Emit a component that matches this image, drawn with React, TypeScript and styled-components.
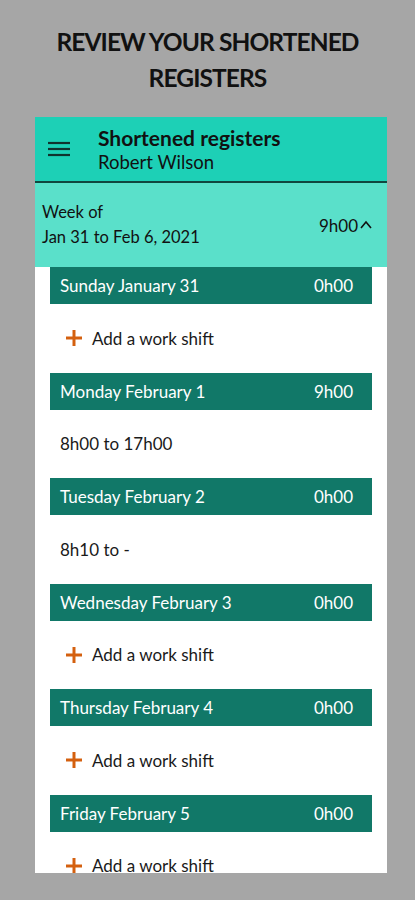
import styled, { createGlobalStyle } from "styled-components";

const GlobalStyle = createGlobalStyle`
    html, body {
        margin: 0;
        padding: 0;
        background: #a6a6a6;
        font-family: Lato, "Open Sans", sans-serif;
    }
`;

const Page = styled.div`
    width: 415px;
    height: 900px;
    overflow: hidden;
    display: flex;
    flex-direction: column;
    align-items: center;
    background: #a6a6a6;
`;

const Title = styled.h1`
    margin: 24px 0 0;
    height: 93px;
    flex-shrink: 0;
    font-size: 24.5px;
    line-height: 36px;
    font-weight: 700;
    color: #111;
    text-align: center;
    letter-spacing: -0.9px;
`;

const Phone = styled.div`
    width: 352px;
    height: 756px;
    flex-shrink: 0;
    margin-left: 7px;
    background: #fff;
    overflow: hidden;
    display: flex;
    flex-direction: column;
    & > * {
        flex-shrink: 0;
    }
`;

const AppBar = styled.header`
    height: 64px;
    background: #1dd0b6;
    border-bottom: 2px solid #10473f;
    display: flex;
    align-items: center;
    gap: 27px;
    padding: 0 12px;
`;

const Titles = styled.div`
    display: flex;
    flex-direction: column;
    color: #111;
    margin-top: -2px;
    strong {
        font-size: 21px;
        line-height: 27px;
        font-weight: 700;
    }
    span {
        font-size: 18.5px;
        line-height: 22px;
    }
`;

const WeekBar = styled.div`
    height: 84px;
    background: #5ae0ca;
    display: flex;
    align-items: center;
    justify-content: space-between;
    padding: 0 15px 0 7px;
    color: #111;
    font-size: 16.5px;
    line-height: 25px;
`;

const Total = styled.div`
    display: flex;
    align-items: center;
    gap: 2px;
    font-size: 17px;
`;

const DayList = styled.div`
    display: flex;
    flex-direction: column;
    padding: 0 15px;
`;

const DayBar = styled.div`
    height: 37px;
    background: #117868;
    color: #fff;
    display: flex;
    align-items: center;
    justify-content: space-between;
    padding: 0 19px 0 10px;
    font-size: 17px;
`;

const DayBody = styled.div`
    height: 68.5px;
    display: flex;
    align-items: center;
    padding-left: 10px;
    font-size: 17px;
    color: #1a1a1a;
`;

const AddShift = styled.div`
    display: flex;
    align-items: center;
    gap: 9px;
    padding-left: 5px;
`;

const days = [
    { name: "Sunday January 31", total: "0h00" },
    { name: "Monday February 1", total: "9h00", shift: "8h00 to 17h00" },
    { name: "Tuesday February 2", total: "0h00", shift: "8h10 to -" },
    { name: "Wednesday February 3", total: "0h00" },
    { name: "Thursday February 4", total: "0h00" },
    { name: "Friday February 5", total: "0h00" },
];

const Burger = () => (
    <svg width="24" height="16" viewBox="0 0 24 16">
        <g stroke="#10332e" strokeWidth="2.2">
            <line x1="1" y1="2" x2="23" y2="2" />
            <line x1="1" y1="8" x2="23" y2="8" />
            <line x1="1" y1="14" x2="23" y2="14" />
        </g>
    </svg>
);

const Plus = () => (
    <svg width="18" height="18" viewBox="0 0 18 18">
        <g stroke="#d4600f" strokeWidth="3">
            <line x1="9" y1="1" x2="9" y2="17" />
            <line x1="1" y1="9" x2="17" y2="9" />
        </g>
    </svg>
);

const Caret = () => (
    <svg width="12" height="10" viewBox="0 0 12 10">
        <polyline points="1,8 6,2 11,8" fill="none" stroke="#111" strokeWidth="1.6" />
    </svg>
);

export default function App() {
    return (
        <Page>
            <GlobalStyle />
            <Title>
                REVIEW YOUR SHORTENED
                <br />
                REGISTERS
            </Title>
            <Phone>
                <AppBar>
                    <Burger />
                    <Titles>
                        <strong>Shortened registers</strong>
                        <span>Robert Wilson</span>
                    </Titles>
                </AppBar>
                <WeekBar>
                    <div>
                        Week of
                        <br />
                        Jan 31 to Feb 6, 2021
                    </div>
                    <Total>
                        9h00
                        <Caret />
                    </Total>
                </WeekBar>
                <DayList>
                    {days.map((d) => (
                        <div key={d.name}>
                            <DayBar>
                                <span>{d.name}</span>
                                <span>{d.total}</span>
                            </DayBar>
                            <DayBody>
                                {d.shift ? (
                                    d.shift
                                ) : (
                                    <AddShift>
                                        <Plus />
                                        Add a work shift
                                    </AddShift>
                                )}
                            </DayBody>
                        </div>
                    ))}
                </DayList>
            </Phone>
        </Page>
    );
}
